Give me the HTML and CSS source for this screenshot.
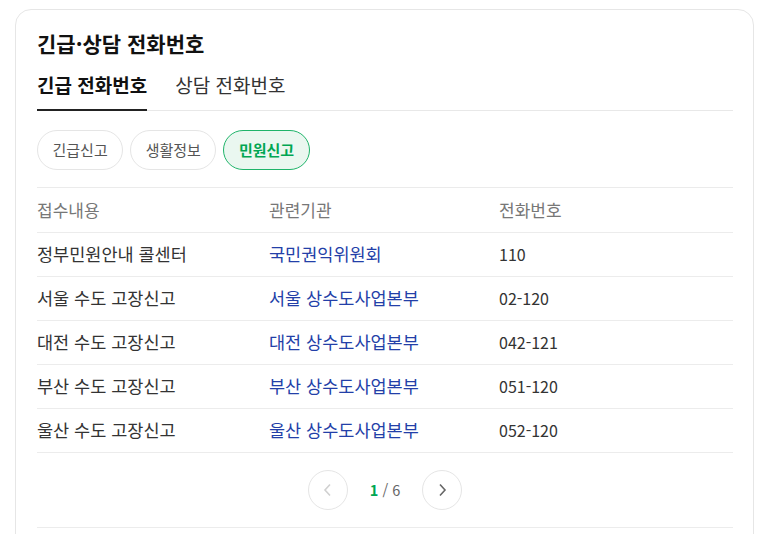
FILE: index.html
```html
<!DOCTYPE html>
<html lang="ko">
<head>
<meta charset="utf-8">
<link rel="stylesheet" href="styles.css">
</head>
<body>
<section class="card">
  <h2 class="title">긴급·상담 전화번호</h2>
  <div class="tabs">
    <span class="tab active">긴급 전화번호</span>
    <span class="tab">상담 전화번호</span>
  </div>
  <div class="chips">
    <span class="chip">긴급신고</span>
    <span class="chip">생활정보</span>
    <span class="chip on">민원신고</span>
  </div>
  <table class="tbl">
    <thead>
      <tr><th>접수내용</th><th>관련기관</th><th>전화번호</th></tr>
    </thead>
    <tbody>
      <tr><td>정부민원안내 콜센터</td><td class="link">국민권익위원회</td><td class="num">110</td></tr>
      <tr><td>서울 수도 고장신고</td><td class="link">서울 상수도사업본부</td><td class="num">02-120</td></tr>
      <tr><td>대전 수도 고장신고</td><td class="link">대전 상수도사업본부</td><td class="num">042-121</td></tr>
      <tr><td>부산 수도 고장신고</td><td class="link">부산 상수도사업본부</td><td class="num">051-120</td></tr>
      <tr><td>울산 수도 고장신고</td><td class="link">울산 상수도사업본부</td><td class="num">052-120</td></tr>
    </tbody>
  </table>
  <div class="pager">
    <span class="pbtn disabled"><svg width="10" height="14" viewBox="0 0 10 14"><path d="M7 1.5 L2 7 L7 12.5" fill="none" stroke="currentColor" stroke-width="1.6"/></svg></span>
    <span class="pnum"><b>1</b> / 6</span>
    <span class="pbtn"><svg width="10" height="14" viewBox="0 0 10 14"><path d="M3 1.5 L8 7 L3 12.5" fill="none" stroke="currentColor" stroke-width="1.6"/></svg></span>
  </div>
  <div class="bottom"></div>
</section>
</body>
</html>
```
FILE: styles.css
```css
* { box-sizing: border-box; }
html, body { margin: 0; padding: 0; background: #fff; }
body {
  font-family: "Noto Sans CJK KR", "Noto Sans", sans-serif;
  color: #333;
  padding: 9px 3px 0 15px;
  overflow: hidden;
  height: 534px;
}
.card {
  border: 1px solid #e6e6e6;
  border-radius: 16px;
  padding: 19px 20px 40px 21px;
  height: 600px;
}
.title {
  margin: 0;
  font-size: 21px;
  font-weight: 700;
  color: #111;
  line-height: 28px;
}
.tabs {
  display: flex;
  gap: 28px;
  margin-top: 15px;
  border-bottom: 1px solid #e8e8e8;
}
.tab {
  font-size: 19px;
  line-height: 26px;
  padding-bottom: 12px;
  color: #333;
}
.tab.active {
  font-weight: 700;
  color: #111;
  border-bottom: 2px solid #222;
  padding-bottom: 10px;
  margin-bottom: -1px;
}
.chips {
  display: flex;
  gap: 7px;
  margin-top: 19px;
  padding-bottom: 17px;
  border-bottom: 1px solid #ebebeb;
}
.chip {
  height: 40px;
  padding: 0 14.5px;
  border: 1px solid #e5e5e5;
  border-radius: 20px;
  font-size: 15px;
  line-height: 38px;
  color: #555;
}
.chip.on {
  border-color: #1fb46a;
  background: #eaf7f0;
  color: #00a653;
  font-weight: 700;
}
.tbl {
  width: 100%;
  border-collapse: collapse;
  table-layout: fixed;
  font-size: 17.5px;
}
.tbl th, .tbl td {
  text-align: left;
  padding: 0;
  height: 44px;
  border-bottom: 1px solid #ececec;
  line-height: 20px;
}
.tbl th {
  font-weight: 400;
  color: #777;
  font-size: 17px;
}
.tbl td { color: #333; }
.tbl td.link { color: #233fa8; }
.tbl td.num { font-size: 16px; }
.tbl td:nth-child(3), .tbl th:nth-child(3) { text-indent: -2px; }
.pager {
  display: flex;
  justify-content: center;
  align-items: center;
  gap: 22px;
  height: 75px;
  border-bottom: 1px solid #ececec;
}
.pbtn {
  width: 40px;
  height: 40px;
  border: 1px solid #e5e5e5;
  border-radius: 50%;
  display: flex;
  align-items: center;
  justify-content: center;
  color: #666;
}
.pbtn.disabled { color: #d0d0d0; }
.pnum {
  font-size: 14.5px;
  color: #666;
  line-height: 20px;
}
.pnum b { color: #00a653; font-weight: 700; }
```
